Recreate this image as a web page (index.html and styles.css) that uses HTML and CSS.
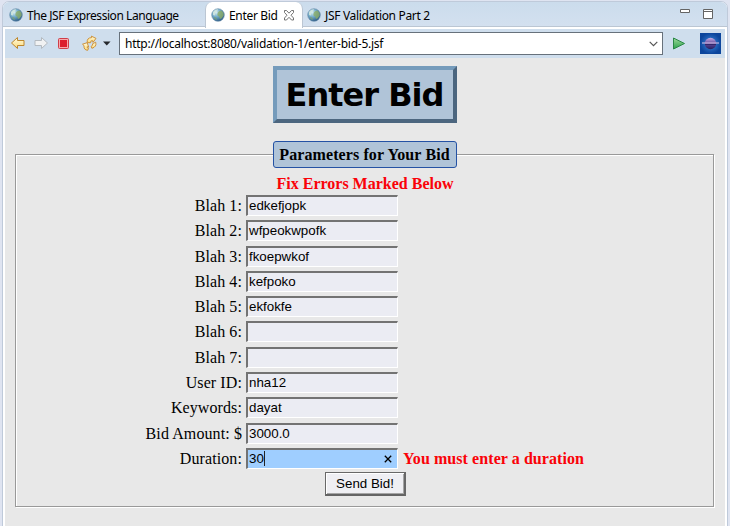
FILE: index.html
```html
<!DOCTYPE html>
<html lang="en">
<head>
<meta charset="utf-8">
<title>Enter Bid</title>
<link rel="stylesheet" href="styles.css">
</head>
<body>
<svg width="0" height="0" class="defs" aria-hidden="true">
  <defs>
    <radialGradient id="sea" cx="35%" cy="30%" r="75%"><stop offset="0" stop-color="#d5edf4"/><stop offset=".45" stop-color="#75adc9"/><stop offset="1" stop-color="#285783"/></radialGradient>
    <linearGradient id="gold" x2="0" y2="1"><stop offset="0" stop-color="#fffbe0"/><stop offset="1" stop-color="#fbd978"/></linearGradient>
    <linearGradient id="leaf" x2="0" y2="1"><stop offset="0" stop-color="#9fd99b"/><stop offset="1" stop-color="#2ba14c"/></linearGradient>
    <radialGradient id="night"><stop offset="0" stop-color="#3f8ade"/><stop offset="1" stop-color="#0c459c"/></radialGradient>
    <linearGradient id="moon" x2="0" y2="1"><stop offset="0" stop-color="#c5afe6"/><stop offset=".5" stop-color="#62489b"/><stop offset="1" stop-color="#25205f"/></linearGradient>
    <symbol id="globe" viewBox="0 0 14 14"><circle cx="7" cy="7" r="6.3" fill="url(#sea)" stroke="#668caa" stroke-width=".6"/><path d="M2 4Q4 1 7 1.3L6 3.6 4.2 5 4 7.500 2 7Z" fill="#d6e9df" opacity=".8"/><path d="M8 3.300l2.500-.8 2 2.500.2 2.500-2 2.700-1.700.8-.7-2.300-2-1.500.4-2.500z" fill="#8aab66" opacity=".8"/><path d="M3 9l2 .5L6 12 3.700 11z" fill="#7da36d" opacity=".8"/></symbol>
  </defs>
</svg>
<div class="window">
  <div class="tabs">
    <div class="tab first"><svg class="globe"><use href="#globe"/></svg><span class="t1">The JSF Expression Language</span></div>
    <div class="tab active"><svg class="globe"><use href="#globe"/></svg><span class="t2">Enter Bid</span>
      <svg class="close" width="12" height="11" viewBox="0 0 12 11"><path d="M1.500.500h2L6 3.200 8.500.500h2v2L8 5.200l2.500 2.800v2h-2L6 7.300 3.500 10h-2V8L4 5.200 1.500 2.500z" fill="#fff" stroke="#646464" stroke-width=".9"/></svg>
    </div>
    <div class="tab last"><svg class="globe"><use href="#globe"/></svg><span class="t3">JSF Validation Part 2</span></div>
    <svg class="controls" width="34" height="11" viewBox="0 0 34 11"><g fill="#fff" stroke="#646464"><path d="M.5.500h9v3h-9zM23.500.500h9v9h-9z"/><path d="M23.500 2.500h9"/></g></svg>
  </div>
  <div class="toolbar">
    <svg class="nav" width="112" height="28" viewBox="0 0 112 28">
      <path d="M6.500 14L12.500 8.500v3h6.500v5h-6.500v3z" fill="url(#gold)" stroke="#bd872e"/>
      <path d="M42.500 14L36.500 8.500v3H30v5h6.500v3z" fill="#f1f2f3" stroke="#b4bac0"/>
      <rect x="53.500" y="9.500" width="10" height="10" rx="1" fill="#f7a9ac" stroke="#cf3e48"/><rect x="55" y="11" width="7" height="7" fill="#dc1e2d"/>
      <g id="turn" fill="url(#gold)" stroke="#c98a2c" stroke-width=".9" stroke-linejoin="round">
        <path d="M82.300 13.700q-.8-4.900 4.400-5.100l-.3-1.500 4.600 2.300-3 3.900-.6-1.800q-2.200.1-1.700 2.200z"/>
        <path d="M77.500 15.200l4.600-1.500 1.700 4.500-1.600-.5q-.4 1.500 1.300 1.700l-.8 1.900q-4-.2-3.700-4.700z"/>
        <path d="M87.700 14.700l3-1.500q1.300 4.500-3.800 6.100l-.8-1.900q2-.8 1.600-2.700z"/>
      </g>
      <path d="M98 12.500h7.500l-3.750 4z" fill="#25282c"/>
    </svg>
    <div class="address"><span class="url">http://localhost:8080/validation-1/enter-bid-5.jsf</span><svg width="9" height="6" viewBox="0 0 9 6"><path d="M.7.800l3.800 3.800L8.300.800" fill="none" stroke="#555" stroke-width="1.200"/></svg></div>
    <svg class="go" width="14" height="13" viewBox="0 0 14 13"><path d="M1.500 1v11l11-5.500z" fill="url(#leaf)" stroke="#2a8747"/></svg>
    <svg class="planet" width="21" height="21" viewBox="0 0 21 21"><rect width="21" height="21" fill="url(#night)"/><circle cx="10.500" cy="10.500" r="5.700" fill="url(#moon)"/><path d="M2 10h17" stroke="#dac7ec" stroke-width="1.200"/><path d="M5 11.500h11" stroke="#30266a"/></svg>
  </div>
  <main class="page">
    <h1>Enter Bid</h1>
    <fieldset>
      <legend>Parameters for Your Bid</legend>
      <p class="notice"><span>Fix Errors Marked Below</span></p>
      <div class="form">
        <label>Blah 1:</label><div class="field"><span>edkefjopk</span></div>
        <label>Blah 2:</label><div class="field"><span>wfpeokwpofk</span></div>
        <label>Blah 3:</label><div class="field"><span>fkoepwkof</span></div>
        <label>Blah 4:</label><div class="field"><span>kefpoko</span></div>
        <label>Blah 5:</label><div class="field"><span>ekfokfe</span></div>
        <label>Blah 6:</label><div class="field"></div>
        <label>Blah 7:</label><div class="field"></div>
        <label>User ID:</label><div class="field"><span>nha12</span></div>
        <label>Keywords:</label><div class="field"><span>dayat</span></div>
        <label>Bid Amount: $</label><div class="field"><span>3000.0</span></div>
        <label>Duration:</label><div class="field focused"><span>30</span><i class="caret"></i><svg class="clear" width="8" height="8" viewBox="0 0 8 8"><path d="M.8.800l6.400 6.400M7.200.800L.8 7.200" stroke="#000" stroke-width="1.300"/></svg></div>
        <strong class="error">You must enter a duration</strong>
      </div>
      <button type="button">Send Bid!</button>
    </fieldset>
  </main>
</div>
</body>
</html>
```
FILE: styles.css
```css
* { box-sizing: border-box; }
body { margin: 0; width: 730px; height: 526px; overflow: hidden; background: #dfe4f1; color: #000; }
svg { display: block; flex: none; }
.defs { position: absolute; }
.window { margin: 1px 2px 0; height: 530px; background: #fff; border: 1px solid #bfcada; border-radius: 7px 7px 0 0; overflow: hidden; }
.tabs { height: 25px; display: flex; background: linear-gradient(#cbdcec, #d3e0ef); border-bottom: 1px solid #bbc6d3; font: 12px "Noto Sans", sans-serif; white-space: nowrap; }
.tab { display: flex; align-items: center; height: 26px; }
.globe { width: 14px; height: 14px; margin-right: 4px; }
.first { width: 202px; padding-left: 6px; }
.active { width: 98px; padding-left: 5px; background: #fff; border: 1px solid #bbc6d3; border-width: 0 1px; border-radius: 7px 7px 0 0; }
.last { padding-left: 4px; }
.t1 { letter-spacing: -.44px; }
.t2 { letter-spacing: -.32px; }
.t3 { letter-spacing: -.33px; }
.close { margin-left: 5px; }
.controls { margin: 7px 13px 0 auto; }
.toolbar { height: 29px; margin: 2px 2px 0; display: flex; background: #cfdeed; }
.nav { margin-right: 2px; }
.address { width: 544px; height: 23px; margin-top: 3px; padding: 0 4px 0 5px; display: flex; align-items: center; justify-content: space-between; background: #fff; border: 1px solid #67717b; font: 12px "Noto Sans", sans-serif; }
.url { letter-spacing: -.25px; white-space: nowrap; }
.go { margin: 8px 0 0 9px; }
.planet { margin: 4px 0 0 14px; }
.page { height: 480px; margin: 0 2px; padding: 8px 11px 0 10px; background: #e8e8e8; }
h1 { width: 184px; height: 57px; margin: 0 auto; border: 4px solid; border-color: #759bbb #4c667f #4c667f #759bbb; background: #b0c4d8; font: bold 32px/51px "DejaVu Sans", sans-serif; text-align: center; white-space: nowrap; letter-spacing: -1px; }
fieldset { height: 366px; margin: 18px 0 0; padding: 0; border: 1px solid #999; box-shadow: 1px 1px #fff, inset 1px 1px #fff; min-width: 0; }
legend { width: 184px; height: 27px; margin: 0 auto; padding: 0; border: 1px solid #2452a4; border-radius: 3px; background: #b0c4d8; font: bold 16px/26px "Liberation Serif", serif; letter-spacing: .1px; text-align: center; white-space: nowrap; }
.notice { margin: 6px 0 1px; height: 19px; color: #fa0208; padding-left: 1px; font: bold 16px/19px "Liberation Serif", serif; text-align: center; }
.form { display: grid; grid-template-columns: 226px 152px auto; grid-auto-rows: 25.300px; column-gap: 4px; font: 16px/24px "Liberation Serif", serif; }
label { grid-column: 1; text-align: right; letter-spacing: .1px; }
.field { height: 21px; margin-top: 1px; padding: 0 0 1px 1px; display: flex; align-items: center; background: #ebecf3; border: 2px solid; border-color: #737373 #fff #fff #737373; border-width: 2px 1px 1px 2px; font: 13.333px/17px "Liberation Sans", sans-serif; }
.focused { background: #9fceff; }
.caret { width: 1px; height: 15px; background: #222; }
.clear { margin: 1px 5px 0 auto; }
.error { color: #fa0208; padding-left: 1px; white-space: nowrap; letter-spacing: .07px; }
button { display: block; width: 81px; height: 24px; margin: 0 0 0 309px; padding: 0; background: #efeff3; border: 2px solid; border-color: #686868 #686868 #646464 #686868; border-width: 1px 2px 2px 1px; box-shadow: inset 1px 1px #fff, inset -1px -1px #a5a5a5; font: 13.333px "Liberation Sans", sans-serif; color: #000; }
```
